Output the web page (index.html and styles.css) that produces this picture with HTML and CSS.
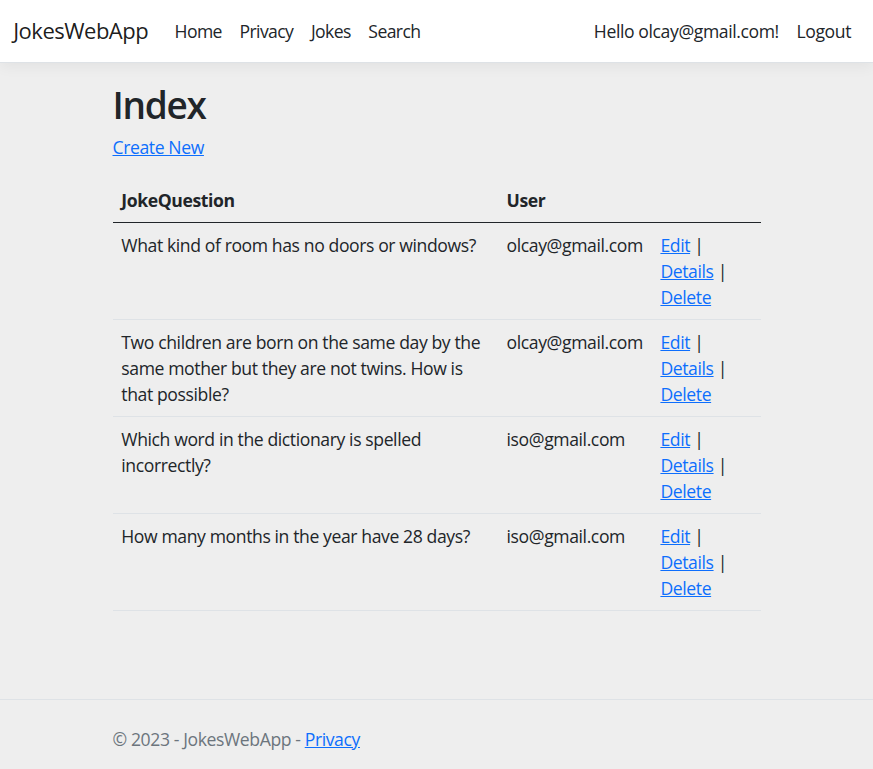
FILE: index.html
```html
<!DOCTYPE html>
<html lang="en">
<head>
<meta charset="utf-8">
<title>Index - JokesWebApp</title>
<link rel="stylesheet" href="styles.css">
</head>
<body>
<header class="navbar">
  <div class="navbar-inner">
    <a class="brand" href="#">JokesWebApp</a>
    <ul class="nav nav-main">
      <li><a class="nav-link" href="#">Home</a></li>
      <li><a class="nav-link" href="#">Privacy</a></li>
      <li><a class="nav-link" href="#">Jokes</a></li>
      <li><a class="nav-link" href="#">Search</a></li>
    </ul>
    <ul class="nav nav-user">
      <li><a class="nav-link" href="#">Hello olcay@gmail.com!</a></li>
      <li><a class="nav-link" href="#">Logout</a></li>
    </ul>
  </div>
</header>
<main class="container">
  <h1 class="title">Index</h1>
  <p class="create"><a href="#">Create New</a></p>
  <table class="table">
    <thead>
      <tr>
        <th class="col-q">JokeQuestion</th>
        <th class="col-u">User</th>
        <th class="col-a"></th>
      </tr>
    </thead>
    <tbody>
      <tr>
        <td>What kind of room has no doors or windows?</td>
        <td>olcay@gmail.com</td>
        <td><a href="#">Edit</a> |<br><a href="#">Details</a> |<br><a href="#">Delete</a></td>
      </tr>
      <tr>
        <td>Two children are born on the same day by the same mother but they are not twins. How is that possible?</td>
        <td>olcay@gmail.com</td>
        <td><a href="#">Edit</a> |<br><a href="#">Details</a> |<br><a href="#">Delete</a></td>
      </tr>
      <tr>
        <td>Which word in the dictionary is spelled incorrectly?</td>
        <td>iso@gmail.com</td>
        <td><a href="#">Edit</a> |<br><a href="#">Details</a> |<br><a href="#">Delete</a></td>
      </tr>
      <tr>
        <td>How many months in the year have 28 days?</td>
        <td>iso@gmail.com</td>
        <td><a href="#">Edit</a> |<br><a href="#">Details</a> |<br><a href="#">Delete</a></td>
      </tr>
    </tbody>
  </table>
</main>
<footer class="footer">
  <div class="container footer-inner">&copy; 2023 - JokesWebApp - <a href="#">Privacy</a></div>
</footer>
</body>
</html>
```

FILE: styles.css
```css
* { box-sizing: border-box; }
html, body { margin: 0; padding: 0; }
body {
  font-family: "Open Sans", "Noto Sans", sans-serif;
  font-size: 17.6px;
  line-height: 1.5;
  letter-spacing: -0.4px;
  color: #212529;
  background: #eeeeee;
  min-height: 769px;
  display: flex;
  flex-direction: column;
}
a { color: #0d6efd; }

.navbar {
  background: #ffffff;
  border-bottom: 1px solid #dee2e6;
  box-shadow: 0 4px 13px rgba(0,0,0,0.05);
  padding: 8.8px 0;
  margin-bottom: 17.6px;
}
.navbar-inner {
  display: flex;
  align-items: center;
  padding: 0 13.2px;
}
.brand {
  font-size: 22px;
  color: rgba(0,0,0,0.9);
  text-decoration: none;
  padding: 5.5px 0;
  margin-right: 17.6px;
  line-height: 1.5;
  letter-spacing: -0.5px;
}
.nav {
  display: flex;
  list-style: none;
  margin: 0;
  padding: 0;
}
.nav-main { flex: 1; }
.nav-link {
  display: block;
  padding: 8.8px;
  color: #212529;
  text-decoration: none;
}
.nav-main .nav-link { letter-spacing: -0.6px; }

.container {
  width: 648px;
  margin: 0 auto;
}
main.container { padding-bottom: 17.6px; flex: 1; }
.title {
  font-size: 37px;
  font-weight: 600;
  line-height: 1.2;
  letter-spacing: -1.3px;
  margin: 2.8px 0 7px;
}
.create { margin: 0 0 17.6px; }

.table {
  width: 648px;
  border-collapse: collapse;
  margin-bottom: 17.6px;
}
.table th, .table td {
  padding: 8.8px;
  text-align: left;
  vertical-align: top;
  border-bottom: 1px solid #dee2e6;
}
.table td { line-height: 26.1px; }
.table th { font-weight: 700; }
.table thead th { border-bottom: 1px solid #212529; }
.col-q { width: 386px; }
.col-u { width: 153px; }
.col-a { width: 109px; }

.footer {
  border-top: 1px solid #dee2e6;
  color: #6c757d;
  white-space: nowrap;
}
.footer-inner {
  line-height: 60px;
  padding-top: 9px;
}
```
